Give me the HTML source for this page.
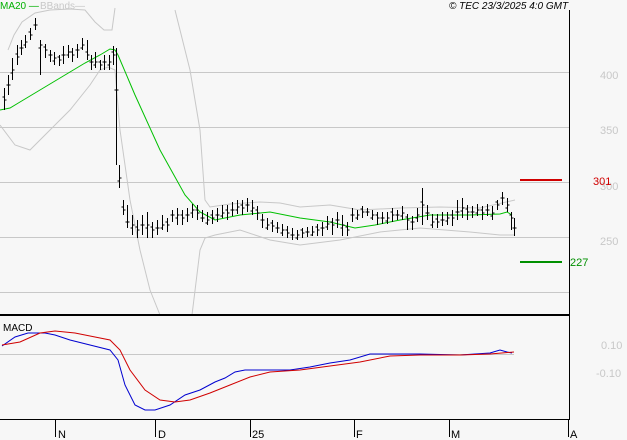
<!DOCTYPE html>
<html><head><style>
html,body{margin:0;padding:0;background:#f7f7f7;}
svg{display:block;font-family:"Liberation Sans",sans-serif;}
</style></head><body>
<svg id="s" width="627" height="440" viewBox="0 0 627 440" xmlns="http://www.w3.org/2000/svg">
<rect width="627" height="440" fill="#f7f7f7"/>
<g stroke="#c8c8c8" stroke-width="1">
<line x1="0" y1="72.5" x2="569" y2="72.5"/>
<line x1="0" y1="127.5" x2="569" y2="127.5"/>
<line x1="0" y1="182.5" x2="569" y2="182.5"/>
<line x1="0" y1="237.5" x2="569" y2="237.5"/>
<line x1="0" y1="292.5" x2="569" y2="292.5"/>
<line x1="0" y1="354.5" x2="514" y2="354.5"/>
</g>
<g fill="none" stroke="#c8c8c8" stroke-width="1">
<polyline points="8,50 14,35 22,22 35,13 50,10 70,9 85,10 95,22 104,30 112,30 115,8"/>
<polyline points="175,10 190,70 200,130 205,200 210,207 230,204 260,202 280,203 300,207 330,205 360,210 400,208 440,207 480,208 515,200"/>
<polyline points="0,125 15,145 30,150 50,130 70,110 90,85 100,70 108,67 115,70 120,130 130,200 140,250 150,290 160,315"/>
<polyline points="192,315 200,250 205,238 215,235 240,230 270,240 300,245 340,240 380,232 420,228 470,232 500,235 515,235"/>
</g>
<polyline fill="none" stroke="#00c000" stroke-width="1" points="0,110 10,108 20,102 45,87 70,72 85,63 100,55 110,49 115,50 118,55 135,95 160,150 185,195 200,212 215,220 240,215 270,212 300,218 330,222 355,228 375,225 400,220 430,215 470,215 500,214 507,212 512,215"/>
<g id="bars" stroke="#000" stroke-width="1" shape-rendering="crispEdges"></g>
<line x1="520" y1="180" x2="562" y2="180" stroke="#d00000" stroke-width="2"/>
<line x1="520" y1="262" x2="562" y2="262" stroke="#009000" stroke-width="2"/>
<line x1="0" y1="315" x2="569" y2="315" stroke="#000" stroke-width="2"/>
<line x1="569.5" y1="10" x2="569.5" y2="420" stroke="#000"/>
<line x1="0" y1="419.5" x2="569" y2="419.5" stroke="#000"/>
<polyline fill="none" stroke="#0000d0" stroke-width="1" points="2,346 15,337 28,333 45,333 55,335 70,340 90,345 110,350 118,360 125,385 135,405 145,410 155,410 170,405 185,395 200,390 215,382 225,378 235,372 245,370 260,370 290,370 310,367 330,363 350,360 370,354 390,354 420,354 460,355 490,353 500,350 507,352 512,353"/>
<polyline fill="none" stroke="#d00000" stroke-width="1" points="2,345 20,342 40,333 55,331 75,333 90,336 110,340 120,350 130,370 145,390 160,400 175,402 190,400 210,393 230,385 250,377 270,372 300,370 330,366 360,362 390,356 420,355 460,355 490,354 514,352"/>
<g stroke="#000"><line x1="55.5" y1="420" x2="55.5" y2="437"/><line x1="155.5" y1="420" x2="155.5" y2="437"/><line x1="250.5" y1="420" x2="250.5" y2="437"/><line x1="354.5" y1="420" x2="354.5" y2="437"/><line x1="449.5" y1="420" x2="449.5" y2="437"/><line x1="568.5" y1="420" x2="568.5" y2="437"/></g>
<g font-size="11" fill="#000"><text x="58" y="438">N</text><text x="158" y="438">D</text><text x="252" y="438">25</text><text x="356" y="438">F</text><text x="451" y="438">M</text><text x="570" y="438">A</text></g>
<text x="3" y="331" font-size="10" fill="#000">MACD</text>
<g font-size="11" fill="#c8c8c8"><text x="600" y="79">400</text><text x="600" y="134">350</text><text x="600" y="190">300</text><text x="600" y="245">250</text><text x="601" y="349">0.10</text><text x="596" y="377">-0.10</text></g>
<text x="593" y="185" font-size="11" fill="#d00000">301</text>
<text x="570" y="266" font-size="11" fill="#009000">227</text>
<text x="0" y="9" font-size="10" fill="#00b000">MA20 —</text>
<text x="40" y="9" font-size="10" fill="#c8c8c8">BBands—</text>
<text x="449" y="9" font-size="10" font-style="italic" fill="#000">© TEC 23/3/2025 4:0 GMT</text>
</svg>
<script>
var d=[[4,100,110,88],[8,85,95,75],[12,70,80,58],[17,57,65,45],[21,48,55,40],[25,42,48,35],[30,35,40,28],[35,25,30,18],[40,45,75,40],[45,50,58,44],[50,55,62,50],[54,58,65,52],[59,60,66,55],[63,55,64,46],[68,52,58,45],[72,55,62,48],[77,50,58,44],[82,45,50,38],[87,55,60,40],[91,62,70,55],[95,62,68,52],[100,65,70,60],[104,62,70,55],[109,62,70,55],[113,55,65,46],[116,90,165,48],[119,178,188,165],[123,210,215,200],[127,222,228,205],[132,225,235,215],[137,230,238,220],[142,225,235,215],[147,225,238,212],[152,230,238,222],[157,228,235,220],[162,225,230,215],[167,225,232,218],[172,215,222,210],[177,215,225,208],[182,218,225,210],[187,215,222,208],[192,210,218,204],[197,213,220,205],[202,218,222,210],[207,220,225,212],[212,218,224,210],[217,215,222,208],[222,213,218,205],[227,213,220,205],[232,210,216,202],[237,207,214,200],[242,208,215,200],[247,205,212,198],[252,208,215,200],[257,213,220,206],[262,220,228,214],[267,225,230,218],[272,226,232,220],[277,228,233,222],[282,230,236,224],[287,233,238,226],[292,235,240,228],[297,235,240,230],[302,233,238,228],[307,232,237,227],[312,232,236,226],[317,230,236,224],[322,228,236,222],[327,224,230,216],[332,225,235,218],[337,220,228,212],[342,225,236,215],[347,230,236,222],[352,215,222,208],[357,215,220,210],[362,212,218,206],[367,212,216,208],[372,215,220,210],[377,218,225,212],[382,218,224,212],[387,218,224,212],[392,215,222,208],[397,215,220,210],[402,213,220,206],[407,220,230,214],[412,222,230,216],[417,215,222,208],[422,205,225,188],[427,213,220,205],[432,222,228,214],[437,222,228,214],[442,220,226,212],[447,218,225,212],[452,218,226,210],[457,212,220,200],[462,208,218,198],[467,212,220,205],[472,212,218,206],[477,210,216,204],[482,213,220,206],[487,210,216,204],[492,213,220,206],[497,205,210,200],[502,198,205,192],[507,205,212,198],[511,218,230,212],[514,228,236,218]];
var g=document.getElementById('bars'),h='';
d.forEach(function(b,i){var x=b[0]+.5;var o=b[1]+(i%3-1)*3;h+='<line x1="'+x+'" y1="'+b[3]+'" x2="'+x+'" y2="'+b[2]+'"/><line x1="'+(x-2)+'" y1="'+o+'" x2="'+x+'" y2="'+o+'"/><line x1="'+x+'" y1="'+b[1]+'" x2="'+(x+2)+'" y2="'+b[1]+'"/>';});
g.innerHTML=h;
</script>
</body></html>
